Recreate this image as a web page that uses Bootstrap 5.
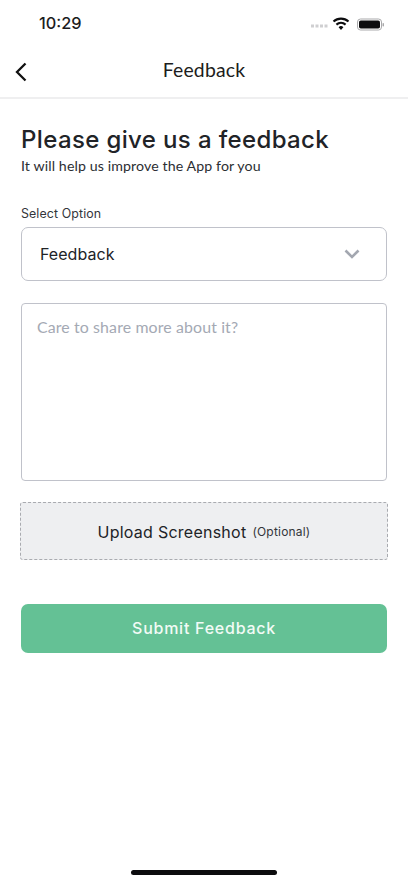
<!DOCTYPE html>
<html lang="en">
<head>
<meta charset="utf-8">
<title>Feedback</title>
<link href="https://cdn.jsdelivr.net/npm/bootstrap@5.3.0/dist/css/bootstrap.min.css" rel="stylesheet">
<style>
html,body{height:100%;}
body{font-family:"Inter","Liberation Sans",sans-serif;color:#212327;background:#fff;}
.screen{height:883px;overflow:hidden;}
.status-row{height:47px;padding:0 21px 0 39px;}
.clock{font-size:16.3px;font-weight:500;color:#1c1c1e;}
.head-row{height:52px;border-bottom:2px solid #efeff0;}
.back-btn{left:15px;top:15px;line-height:0;}
.head-title{font-family:"Lato","Liberation Sans",sans-serif;font-size:19.4px;letter-spacing:.2px;color:#1d1d20;line-height:24px;margin-top:-5px;}
.content{padding:26px 21px 0;}
.main-title{font-size:24px;font-weight:500;line-height:30px;letter-spacing:.37px;margin:0;}
.sub-title{font-family:"Lato","Liberation Sans",sans-serif;font-size:14.2px;line-height:20px;letter-spacing:.1px;margin:1px 0 0;color:#2c2e33;}
.field-label{font-size:12.4px;line-height:16px;margin:30px 0 5px;letter-spacing:.1px;font-weight:400;color:#33353a;}
.picker{height:54px;border:1.5px solid #c0c2ca;border-radius:7px;padding:0 26px 0 18px;font-size:16px;letter-spacing:.05px;}
.note-box{height:178px;margin-top:22px;border:1.5px solid #c0c2ca;border-radius:4px;padding:11px 15px;font-family:"Lato","Liberation Sans",sans-serif;font-size:15.9px;letter-spacing:.12px;color:#a0a5b0;resize:none;width:100%;display:block;}
.note-box::placeholder{color:#a4a9b4;opacity:1;}
.shot-box{height:58px;margin:21px -1px 0;padding-top:2px;background:#eeeff1;border:1.5px dashed #a9abb0;border-radius:3px;gap:6px;}
.shot-main{font-size:16px;letter-spacing:.25px;font-weight:400;}
.shot-hint{font-size:12px;color:#33353a;letter-spacing:.2px;line-height:16px;}
.send-btn{height:49px;margin-top:44px;background:#64c195;border:0;border-radius:7px;color:#f2fbf6;font-size:16px;font-weight:500;letter-spacing:.75px;width:100%;padding-bottom:7px;}
.home-pill{left:131px;bottom:8px;width:146px;height:5px;border-radius:3px;background:#0c0c0e;}
</style>
</head>
<body>
<div class="screen position-relative">
  <div class="status-row d-flex align-items-center justify-content-between">
    <span class="clock">10:29</span>
    <svg width="76" height="14" viewBox="0 0 76 14" aria-hidden="true">
      <g fill="#cfcfd1"><rect x="0" y="7.5" width="3" height="3"/><rect x="4.5" y="7.5" width="3" height="3"/><rect x="9" y="7.5" width="3" height="3"/><rect x="13.5" y="7.5" width="3" height="3"/></g>
      <path d="M22.5 4.6a11 11 0 0 1 15 0" fill="none" stroke="#0c0c0e" stroke-width="2.1"/>
      <path d="M25.4 7.6a7 7 0 0 1 9.2 0" fill="none" stroke="#0c0c0e" stroke-width="2.1"/>
      <path d="M27.6 10.2l2.4 2.8 2.4-2.8a3.4 3.4 0 0 0-4.8 0z" fill="#0c0c0e"/>
      <rect x="46.5" y="2" width="24" height="11" rx="3" fill="none" stroke="#a9a9ab"/>
      <rect x="48" y="3.5" width="21" height="8" rx="1.8" fill="#0c0c0e"/>
      <rect x="71.5" y="6" width="1.5" height="3.5" rx=".7" fill="#a9a9ab"/>
    </svg>
  </div>
  <div class="head-row position-relative d-flex align-items-center justify-content-center">
    <span class="back-btn position-absolute">
      <svg width="12" height="20" viewBox="0 0 12 20" aria-hidden="true"><path d="M10.5 1.5L2 10l8.5 8.5" fill="none" stroke="#111" stroke-width="2.3"/></svg>
    </span>
    <span class="head-title">Feedback</span>
  </div>
  <div class="content">
    <h1 class="main-title">Please give us a feedback</h1>
    <p class="sub-title">It will help us improve the App for you</p>
    <div class="field-label">Select Option</div>
    <div class="picker d-flex align-items-center justify-content-between">
      <span>Feedback</span>
      <svg width="16" height="10" viewBox="0 0 16 10" aria-hidden="true"><path d="M1.5 1.5L8 8l6.5-6.5" fill="none" stroke="#a3a7b0" stroke-width="2.6"/></svg>
    </div>
    <textarea class="note-box form-control" placeholder="Care to share more about it?"></textarea>
    <div class="shot-box d-flex align-items-center justify-content-center">
      <span class="shot-main">Upload Screenshot</span>
      <span class="shot-hint">(Optional)</span>
    </div>
    <button class="send-btn btn" type="button">Submit Feedback</button>
  </div>
  <div class="home-pill position-absolute"></div>
</div>
<script src="https://cdn.jsdelivr.net/npm/bootstrap@5.3.0/dist/js/bootstrap.bundle.min.js"></script>
</body>
</html>
